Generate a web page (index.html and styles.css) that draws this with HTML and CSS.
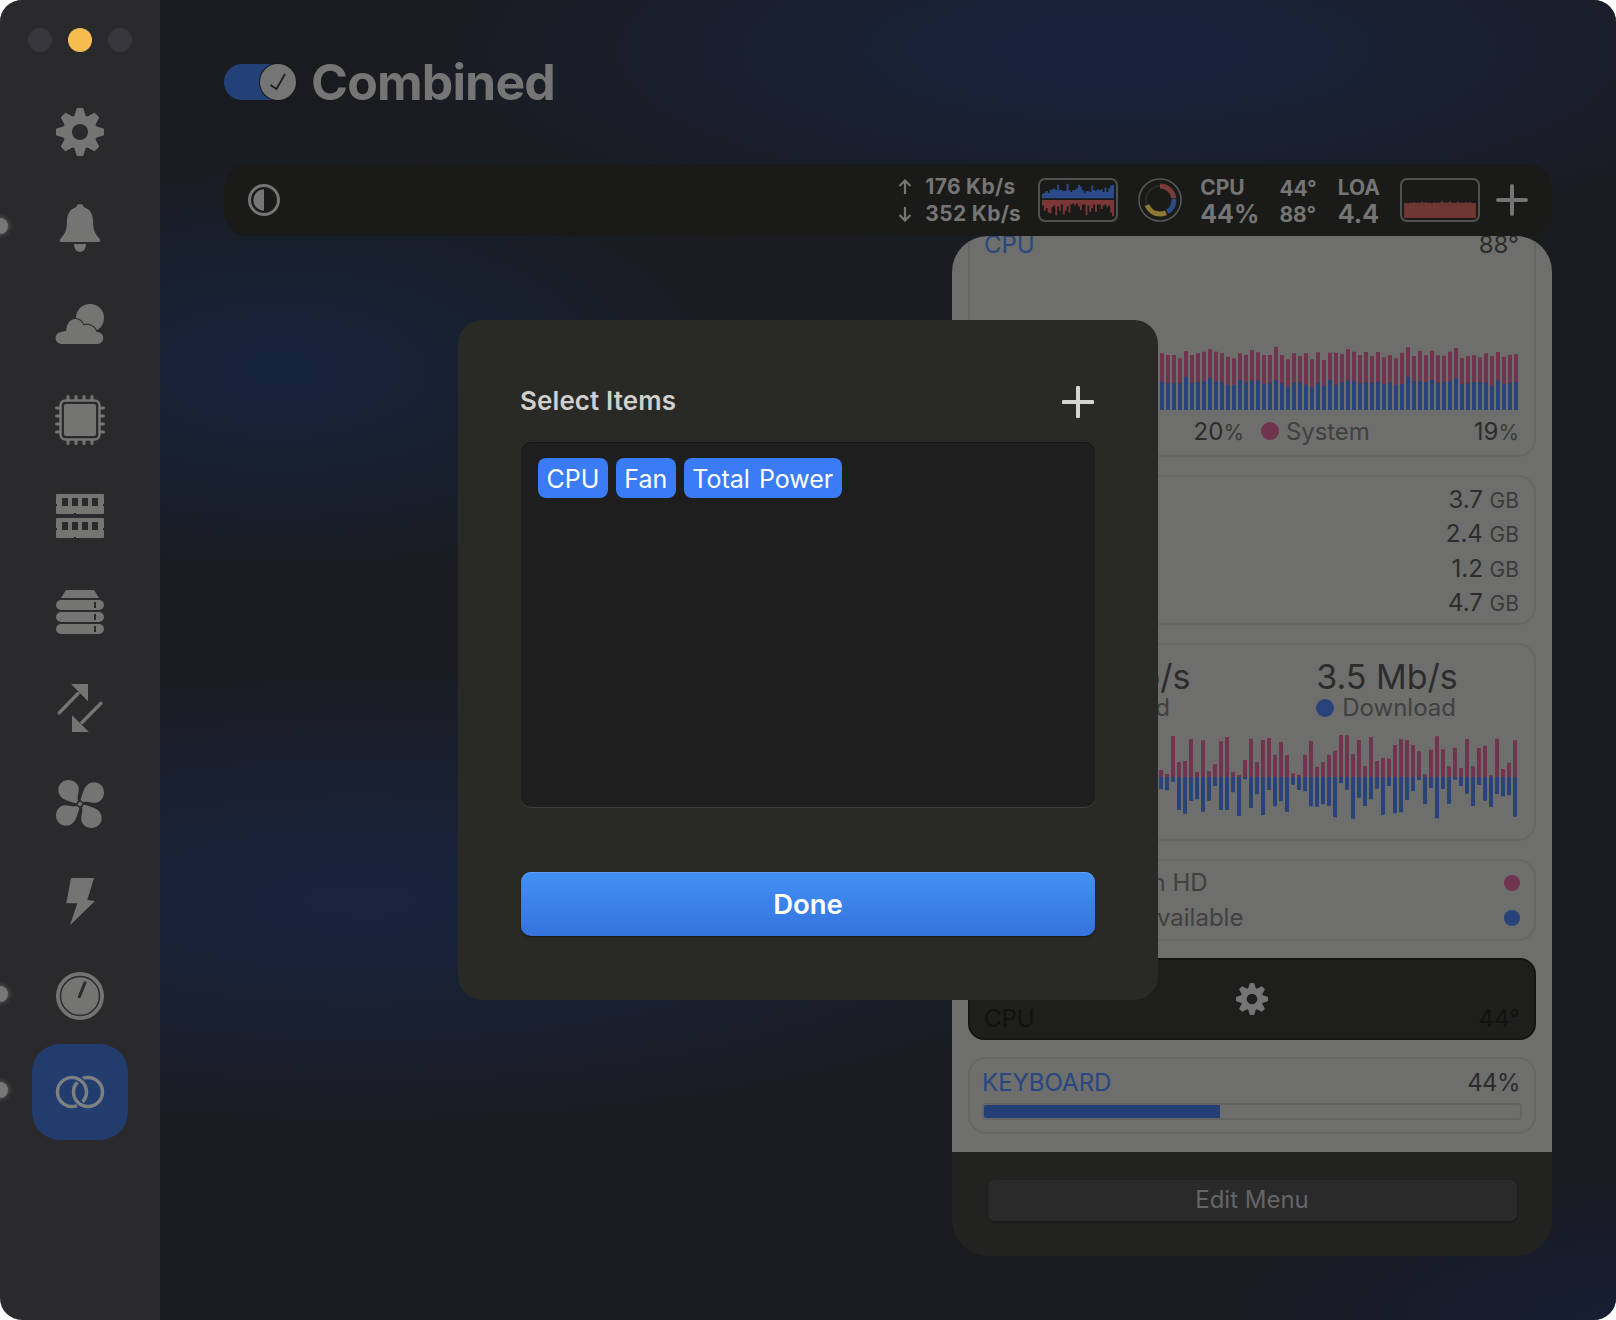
FILE: index.html
```html
<!DOCTYPE html>
<html lang="en">
<head>
<meta charset="utf-8">
<title>Combined</title>
<link rel="stylesheet" href="styles.css">
</head>
<body>
<svg class="defs" width="0" height="0" aria-hidden="true">
  <symbol id="gear" viewBox="0 0 48 48">
    <circle cx="24" cy="24" r="12.5" fill="none" stroke="currentColor" stroke-width="9"/>
    <g fill="currentColor" stroke="currentColor" stroke-width="2" stroke-linejoin="round">
      <polygon points="21.5,1 26.5,1 29,9 19,9"/>
      <polygon points="21.5,1 26.5,1 29,9 19,9" transform="rotate(45 24 24)"/>
      <polygon points="21.5,1 26.5,1 29,9 19,9" transform="rotate(90 24 24)"/>
      <polygon points="21.5,1 26.5,1 29,9 19,9" transform="rotate(135 24 24)"/>
      <polygon points="21.5,1 26.5,1 29,9 19,9" transform="rotate(180 24 24)"/>
      <polygon points="21.5,1 26.5,1 29,9 19,9" transform="rotate(225 24 24)"/>
      <polygon points="21.5,1 26.5,1 29,9 19,9" transform="rotate(270 24 24)"/>
      <polygon points="21.5,1 26.5,1 29,9 19,9" transform="rotate(315 24 24)"/>
    </g>
  </symbol>
</svg>
<div class="window">
  <aside class="sidebar">
    <div class="traffic">
      <span class="light"></span><span class="light light-on"></span><span class="light"></span>
    </div>
    <nav class="nav">
      <div class="nav-item"><svg class="icon" viewBox="0 0 48 48"><use href="#gear"/></svg></div>
      <div class="nav-item"><svg class="icon" viewBox="0 0 48 48"><path d="M24 0c2 0 3.3 1.2 3.7 3C34.5 5 37 11 37 17c0 9 2.200 13 6.800 18 .9 1 .6 3-1.200 3H5.400c-1.800 0-2.100-2-1.200-3C8.800 30 11 26 11 17c0-6 2.500-12 9.300-14C20.700 1.200 22 0 24 0z"/><path d="M18 40h12c0 4.400-2.700 8-6 8s-6-3.600-6-8z"/></svg></div>
      <div class="nav-item"><svg class="icon" viewBox="0 0 48 48"><g transform="translate(0 4)"><circle cx="34" cy="14" r="14"/><path class="cut" d="M6 40a6 6 0 0 1-.8-12c1.800-.8 3.500-1.200 5-1.300C10.600 20 14 15 19 15c4 0 7 2.500 8.500 6.500C31 19.500 38.500 21 40.500 28a6 6 0 0 1 1.500 12z"/></g></svg></div>
      <div class="nav-item"><svg class="icon" viewBox="0 0 48 48"><rect x="4.500" y="4.500" width="39" height="39" rx="5" class="outline"/><rect x="8" y="8" width="32" height="32" rx="2"/><path class="pins" d="M12 .5V4M20 .5V4M28 .5V4M36 .5V4M12 44V47.500M20 44V47.500M28 44V47.500M36 44V47.500M.5 12H4M.5 20H4M.5 28H4M.5 36H4M44 12H47.500M44 20H47.500M44 28H47.500M44 36H47.500"/></svg></div>
      <div class="nav-item"><svg class="icon" viewBox="0 0 48 48"><g transform="translate(0 2)" fill-rule="evenodd"><path d="M1 0H47a1 1 0 0 1 1 1V10h-1v2h1v7a1 1 0 0 1-1 1H20v-1h-2v1H1a1 1 0 0 1-1-1V12h1v-2H0V1a1 1 0 0 1 1-1zM6 4v8h6V4zM16 4v8h6V4zM26 4v8h6V4zM36 4v8h6V4z"/><path d="M1 24H47a1 1 0 0 1 1 1V34h-1v2h1v7a1 1 0 0 1-1 1H20v-1h-2v1H1a1 1 0 0 1-1-1V36h1v-2H0V25a1 1 0 0 1 1-1zM6 28v8h6v-8zM16 28v8h6v-8zM26 28v8h6v-8zM36 28v8h6v-8z"/></g></svg></div>
      <div class="nav-item"><svg class="icon" viewBox="0 0 48 48"><g transform="translate(0 2)" fill-rule="evenodd"><path d="M10 0H38L43 8H5z"/><path d="M5 10H43a5 5 0 0 1 0 10H5a5 5 0 0 1 0-10zM38 12v6h2v-6z"/><path d="M5 22H43a5 5 0 0 1 0 10H5a5 5 0 0 1 0-10zM38 24v6h2v-6z"/><path d="M5 34H43a5 5 0 0 1 0 10H5a5 5 0 0 1 0-10zM38 36v6h2v-6z"/></g></svg></div>
      <div class="nav-item"><svg class="icon" viewBox="0 0 48 48"><path class="stem" d="M3.300 28.700 22 9.500M45 19.300 26 38.500"/><path d="M15 0H32V17.300zM16 31.300 33 48H16z"/></svg></div>
      <div class="nav-item"><svg class="icon" viewBox="0 0 48 48"><path d="M22.500 23C20.500 18 22.800 13 22.800 9 22.800 4 18 0 12.500 0 6.500 0 2.300 4.500 2.300 10c0 6 5 9.500 10 11 4 1.200 7 3 10.200 2z"/><path d="M22.500 23C20.500 18 22.800 13 22.800 9 22.800 4 18 0 12.500 0 6.500 0 2.300 4.500 2.300 10c0 6 5 9.500 10 11 4 1.200 7 3 10.200 2z" transform="rotate(90 24 24)"/><path d="M22.500 23C20.500 18 22.800 13 22.800 9 22.800 4 18 0 12.500 0 6.500 0 2.300 4.500 2.300 10c0 6 5 9.500 10 11 4 1.200 7 3 10.200 2z" transform="rotate(180 24 24)"/><path d="M22.500 23C20.500 18 22.800 13 22.800 9 22.800 4 18 0 12.500 0 6.500 0 2.300 4.500 2.300 10c0 6 5 9.500 10 11 4 1.200 7 3 10.200 2z" transform="rotate(270 24 24)"/><circle cx="24" cy="24" r="2.800" class="hub"/></svg></div>
      <div class="nav-item"><svg class="icon" viewBox="0 -2 48 48"><polygon points="15,0 38,0 31.300,22 39,23 14,47.300 21.300,25.300 10.300,25.300"/></svg></div>
      <div class="nav-item"><svg class="icon" viewBox="0 0 48 48"><circle cx="24" cy="24" r="24"/><circle cx="24" cy="24" r="19.500" class="hub"/><path class="needle" d="M23.300 24.700 29 10.700"/></svg></div>
      <div class="nav-item nav-active"><svg class="icon" viewBox="0 0 48 48"><g transform="translate(0 8)" class="rings"><circle cx="32" cy="16" r="14.500"/><path class="ring-gap" d="M21.080 2.420A14.500 14.500 0 0 1 26.520 6.020"/><path d="M20.960 29.630A14.500 14.500 0 1 1 26.600 25.890"/></g></svg></div>
    </nav>
  </aside>

  <main class="main">
    <header class="head">
      <span class="toggle"><span class="knob"><svg class="check" viewBox="0 0 20 20"><path d="M2.500 13 8.500 17 17 2"/></svg></span></span>
      <h1 class="title">Combined</h1>
    </header>

    <div class="bar">
      <svg class="contrast" viewBox="0 0 32 32"><circle cx="16" cy="16" r="14.500"/><path d="M16 5.300A10.700 10.700 0 0 0 16 26.700z"/></svg>
      <div class="bar-right">
        <div class="net-stat">
          <div class="net-row"><svg class="arrow" viewBox="0 0 14 16"><path d="M7 15V2M1.500 7 7 1.500 12.500 7"/></svg>176 Kb/s</div>
          <div class="net-row"><svg class="arrow" viewBox="0 0 14 16"><path d="M7 1V14M1.500 9 7 14.500 12.500 9"/></svg>352 Kb/s</div>
        </div>
        <div class="mini">
          <svg class="mini-graph" viewBox="0 0 76 40" width="72" height="36" preserveAspectRatio="none">
            <path class="m-blue" d="M1 18V13M3 18V12M5 18V10M7 18V12M9 18V9M11 18V8M13 18V7M15 18V9M17 18V3M19 18V9M21 18V9M23 18V10M25 18V10M27 18V2M29 18V9M31 18V11M33 18V9M35 18V9M37 18V7M39 18V3M41 18V5M43 18V9M45 18V12M47 18V10M49 18V10M51 18V11M53 18V4M55 18V9M57 18V10M59 18V8M61 18V9M63 18V8M65 18V11M67 18V6M69 18V11M71 18V7M73 18V4M75 18V3"/>
            <path class="m-red" d="M1 20V26M3 20V32M5 20V29M7 20V34M9 20V35M11 20V28M13 20V26M15 20V37M17 20V27M19 20V32M21 20V25M23 20V36M25 20V32M27 20V27M29 20V34M31 20V25M33 20V24M35 20V26M37 20V24M39 20V27M41 20V31M43 20V25M45 20V25M47 20V37M49 20V26M51 20V33M53 20V29M55 20V25M57 20V33M59 20V25M61 20V25M63 20V30M65 20V26M67 20V25M69 20V28M71 20V26M73 20V34M75 20V38"/>
          </svg>
        </div>
        <svg class="donut" viewBox="0 0 44 44">
          <circle class="d-outer" cx="22" cy="22" r="21"/>
          <g transform="rotate(-90 22 22)">
            <circle class="d-seg d-grey" cx="22" cy="22" r="14" pathLength="100" stroke-dasharray="100 0"/>
            <circle class="d-seg d-red" cx="22" cy="22" r="14" pathLength="100" stroke-dasharray="23 77"/>
            <circle class="d-seg d-blue" cx="22" cy="22" r="14" pathLength="100" stroke-dasharray="17 83" stroke-dashoffset="-24"/>
            <circle class="d-seg d-yellow" cx="22" cy="22" r="14" pathLength="100" stroke-dasharray="26 74" stroke-dashoffset="-43"/>
          </g>
        </svg>
        <div class="stat"><span class="stat-top">CPU</span><span class="stat-big">44%</span></div>
        <div class="stat stat-temp"><span class="stat-top">44°</span><span class="stat-top">88°</span></div>
        <div class="stat stat-load"><span class="stat-top">LOA</span><span class="stat-big">4.4</span></div>
        <div class="mini mini-load">
          <svg class="mini-graph" viewBox="0 0 72 20" width="72" height="20"><path class="m-load" d="M0 20V5L2 4.500 4 5.500 6 4.500 8 5 10 4 12 5 14 4.500 16 5 18 3.500 20 5 22 4 24 5 26 4.500 28 5.500 30 4 32 5 34 4.500 36 5 38 2.500 40 5 42 4 44 5 46 3 48 5 50 4.500 52 5 54 3.500 56 5 58 4.500 60 5 62 4 64 5 66 4 68 5 72 5V20z"/></svg>
        </div>
        <svg class="plus" viewBox="0 0 32 32"><path d="M16 2V30M2 16H30"/></svg>
      </div>
    </div>

    <section class="panel">
      <div class="panel-body">
        <div class="card card-cpu">
          <div class="row"><span class="blue-label">CPU</span><span class="val">88°</span></div>
          <svg class="cpu-chart" viewBox="60 345 1074 195" width="358" height="65">
            <path class="red" d="M66 540V370M84 540V375M102 540V375M120 540V385M138 540V363M156 540V375M174 540V370M192 540V365M210 540V358M228 540V365M246 540V370M264 540V380M282 540V385M300 540V370M318 540V375M336 540V360M354 540V367M372 540V375M390 540V375M408 540V350M426 540V375M444 540V388M462 540V370M480 540V378M498 540V370M516 540V388M534 540V367M552 540V390M570 540V368M588 540V368M606 540V372M624 540V358M642 540V365M660 540V375M678 540V366M696 540V378M714 540V366M732 540V382M750 540V376M768 540V385M786 540V368M804 540V352M822 540V378M840 540V362M858 540V375M876 540V362M894 540V376M912 540V377M930 540V365M948 540V354M966 540V384M984 540V378M1002 540V376M1020 540V382M1038 540V370M1056 540V378M1074 540V366M1092 540V380M1110 540V374M1128 540V373"/>
            <path class="blue" d="M66 540V456M84 540V460M102 540V458M120 540V460M138 540V441M156 540V458M174 540V456M192 540V454M210 540V443M228 540V455M246 540V456M264 540V465M282 540V465M300 540V450M318 540V458M336 540V452M354 540V452M372 540V462M390 540V458M408 540V450M426 540V460M444 540V470M462 540V458M480 540V456M498 540V464M516 540V472M534 540V458M552 540V468M570 540V450M588 540V464M606 540V456M624 540V452M642 540V454M660 540V460M678 540V455M696 540V458M714 540V455M732 540V462M750 540V458M768 540V465M786 540V462M804 540V441M822 540V454M840 540V454M858 540V456M876 540V450M894 540V460M912 540V456M930 540V454M948 540V443M966 540V462M984 540V460M1002 540V456M1020 540V456M1038 540V458M1056 540V468M1074 540V452M1092 540V462M1110 540V458M1128 540V456"/>
          </svg>
          <div class="legend">
            <div class="legend-item"><span class="dot dot-blue"></span><span class="legend-name">User</span><span class="val">20<small>%</small></span></div>
            <div class="legend-item"><span class="dot dot-red"></span><span class="legend-name">System</span><span class="val">19<small>%</small></span></div>
          </div>
        </div>

        <div class="card card-mem">
          <div class="val">3.7 <small>GB</small></div>
          <div class="val">2.4 <small>GB</small></div>
          <div class="val">1.2 <small>GB</small></div>
          <div class="val">4.7 <small>GB</small></div>
        </div>

        <div class="card card-net">
          <div class="net-cols">
            <div class="net-col net-col-up"><span class="speed">1.7 Mb/s</span><span class="speed-label"><span class="dot dot-red"></span>Upload</span></div>
            <div class="net-col net-col-down"><span class="speed">3.5 Mb/s</span><span class="speed-label"><span class="dot dot-blue"></span>Download</span></div>
          </div>
          <svg class="net-chart" viewBox="54 317 1074 252" width="358" height="84">
            <path class="red" d="M60 443V422M78 443V434M96 443V320M114 443V398M132 443V395M150 443V330M168 443V428M186 443V333M204 443V426M222 443V405M240 443V336M258 443V323M276 443V427M294 443V437M312 443V392M330 443V328M348 443V398M366 443V332M384 443V326M402 443V376M420 443V338M438 443V378M456 443V432M474 443V436M492 443V376M510 443V335M528 443V412M546 443V398M564 443V376M582 443V364M600 443V317M618 443V318M636 443V374M654 443V332M672 443V410M690 443V324M708 443V395M726 443V386M744 443V388M762 443V347M780 443V330M798 443V333M816 443V348M834 443V366M852 443V435M870 443V361M888 443V321M906 443V360M924 443V411M942 443V355M960 443V416M978 443V329M996 443V411M1014 443V356M1032 443V349M1050 443V438M1068 443V328M1086 443V419M1104 443V400M1122 443V333"/>
            <path class="blue" d="M60 443V480M78 443V483M96 443V457M114 443V542M132 443V553M150 443V515M168 443V510M186 443V547M204 443V514M222 443V470M240 443V542M258 443V542M276 443V489M294 443V560M312 443V450M330 443V536M348 443V495M366 443V557M384 443V482M402 443V531M420 443V516M438 443V547M456 443V466M474 443V482M492 443V486M510 443V531M528 443V532M546 443V525M564 443V529M582 443V564M600 443V462M618 443V481M636 443V568M654 443V505M672 443V530M690 443V510M708 443V478M726 443V556M744 443V470M762 443V552M780 443V549M798 443V512M816 443V485M834 443V452M852 443V524M870 443V476M888 443V567M906 443V479M924 443V523M942 443V451M960 443V470M978 443V493M996 443V530M1014 443V467M1032 443V514M1050 443V532M1068 443V494M1086 443V501M1104 443V498M1122 443V562"/>
          </svg>
        </div>

        <div class="card card-disk">
          <div class="row"><span class="disk-label disk-name">Macintosh HD</span><span class="dot dot-red dot-small"></span></div>
          <div class="row"><span class="disk-label disk-free">240 GB Available</span><span class="dot dot-blue dot-small"></span></div>
        </div>

        <div class="card card-dark">
          <svg class="dark-gear" viewBox="0 0 48 48"><use href="#gear"/></svg>
          <div class="row dark-row"><span>CPU</span><span>44°</span></div>
        </div>

        <div class="card card-key">
          <div class="row"><span class="blue-label">KEYBOARD</span><span class="val key-val">44%</span></div>
          <div class="meter"><div class="meter-fill"></div></div>
        </div>
      </div>
      <div class="panel-foot"><div class="edit-btn">Edit Menu</div></div>
    </section>
  </main>

  <span class="edge-dot edge-1"></span>
  <span class="edge-dot edge-2"></span>
  <span class="edge-dot edge-3"></span>

  <div class="modal">
    <div class="modal-head">
      <span class="modal-title">Select Items</span>
      <svg class="modal-plus" viewBox="0 0 32 32"><path d="M16 1.500V30.500M1.500 16H30.500"/></svg>
    </div>
    <div class="tagbox">
      <span class="tag">CPU</span><span class="tag">Fan</span><span class="tag">Total Power</span>
    </div>
    <div class="done">Done</div>
  </div>
</div>
</body>
</html>
```
FILE: styles.css
```css
* { box-sizing: border-box; }
html, body { margin: 0; padding: 0; background: #fff; }
body { width: 1616px; height: 1320px; overflow: hidden; font-family: Inter, "Liberation Sans", sans-serif; }
.defs { position: absolute; }

.window {
  position: relative;
  display: grid;
  grid-template-columns: 160px 1fr;
  height: 1320px;
  border-radius: 22px;
  overflow: hidden;
  box-shadow: inset 0 1px 0 #444;
}

/* sidebar */
.sidebar { background: #2a2a2c; color: #747473; }
.traffic { display: flex; gap: 16px; height: 84px; padding: 28px 0 0 28px; }
.light { width: 24px; height: 24px; border-radius: 50%; background: #38383c; }
.light-on { background: #f5bd4f; }
.nav { display: flex; flex-direction: column; align-items: center; }
.nav-item { width: 96px; height: 96px; display: flex; align-items: center; justify-content: center; }
.icon { width: 48px; height: 48px; fill: #747473; color: #747473; display: block; overflow: visible; }
.nav-active { background: #223c6e; border-radius: 28px; }
.cut { stroke: #2a2a2c; stroke-width: 2; paint-order: stroke; }
.outline { fill: none; stroke: #747473; stroke-width: 2.5; }
.pins { fill: none; stroke: #747473; stroke-width: 3; stroke-linecap: round; }
.stem { fill: none; stroke: #747473; stroke-width: 3.4; stroke-linecap: round; }
.hub { fill: #747473; stroke: #2a2a2c; stroke-width: 1.4; }
.needle { fill: none; stroke: #2a2a2c; stroke-width: 3; stroke-linecap: round; }
.rings { fill: none; stroke: #7d8083; stroke-width: 3.4; }
.rings circle, .rings path { fill: none; }
.ring-gap { stroke: #223c6e; stroke-width: 6.500; }

.edge-dot { position: absolute; left: -8px; width: 16px; height: 16px; border-radius: 50%; background: #777; box-shadow: 0 0 5px 1px rgba(140,140,140,.5); }
.edge-1 { top: 218px; }
.edge-2 { top: 986px; }
.edge-3 { top: 1082px; }

/* main */
.main {
  padding: 64px 64px 0;
  background:
    radial-gradient(ellipse 520px 240px at 120px 370px, #16243d 0%, rgba(22,36,61,0) 100%),
    radial-gradient(ellipse 800px 230px at 960px 50px, #18233e 0%, rgba(24,35,62,0) 100%),
    radial-gradient(ellipse 900px 270px at 200px 900px, #18243e 0%, rgba(24,36,62,0) 100%),
    radial-gradient(ellipse 500px 180px at 1460px 1320px, #171e34 0%, rgba(23,30,52,0) 100%),
    #1a1b1e;
  min-width: 0;
}
.head { display: flex; align-items: center; gap: 15px; height: 36px; margin-bottom: 64px; }
.toggle { width: 72px; height: 36px; border-radius: 18px; background: #234077; display: flex; justify-content: flex-end; }
.knob { width: 36px; height: 36px; border-radius: 50%; background: #757575; box-shadow: 0 0 0 1px #15171c; display: flex; align-items: center; justify-content: center; }
.check { width: 20px; height: 20px; fill: none; stroke: #17181a; stroke-width: 1.6; }
.title { margin: 0; font-size: 50px; line-height: 36px; font-weight: 700; color: #757575; letter-spacing: -.85px; }

.bar { position: relative; z-index: 2; height: 72px; border-radius: 24px; background: #1a1a18; display: flex; align-items: center; justify-content: space-between; padding: 0 24px; color: #757575; }
.contrast { width: 32px; height: 32px; }
.contrast circle { fill: none; stroke: #757575; stroke-width: 3; }
.contrast path { fill: #757575; }
.bar-right { display: flex; align-items: center; }
.net-stat { display: flex; flex-direction: column; gap: 5px; margin-right: 17px; margin-top: 1px; }
.net-row { display: flex; align-items: center; font-size: 21px; line-height: 22px; font-weight: 700; gap: 13px; white-space: nowrap; letter-spacing: .3px; }
.arrow { width: 14px; height: 16px; fill: none; stroke: #757575; stroke-width: 2.2; }
.mini { width: 80px; height: 44px; border: 2px solid #515151; border-radius: 7px; display: flex; align-items: center; justify-content: center; margin-right: 20px; }
.mini-graph { display: block; }
.m-blue { fill: none; stroke: #2a4a8a; stroke-width: 2; }
.m-red { fill: none; stroke: #7a3735; stroke-width: 2; }
.m-load { fill: #6e3632; }
.mini-load { align-items: flex-end; padding-bottom: 2px; margin-right: 16px; margin-left: 20px; }
.donut { width: 44px; height: 44px; margin-right: 18px; }
.d-outer { fill: none; stroke: #565656; stroke-width: 1.6; }
.d-seg { fill: none; stroke-width: 5; }
.d-grey { stroke: #2e2e2e; stroke-width: 1.5; }
.d-red { stroke: #7a3b3b; }
.d-blue { stroke: #2c4a87; }
.d-yellow { stroke: #8f7a35; }
.stat { display: flex; flex-direction: column; gap: 3px; margin-top: 2px; font-weight: 700; color: #757575; }
.stat-temp { margin-left: 20px; }
.stat-load { margin-left: 21px; }
.stat-top { font-size: 21px; line-height: 23px; }
.stat-big { font-size: 25px; line-height: 25px; }
.plus { width: 32px; height: 32px; fill: none; stroke: #757575; stroke-width: 4; stroke-linecap: round; }

/* panel */
.panel { position: relative; width: 600px; height: 1020px; margin-left: auto; border-radius: 36px; overflow: hidden; background: #222221; }
.panel-body { height: 916px; background: #6e6e6c; padding: 0 16px; overflow: hidden; display: flex; flex-direction: column; gap: 18px; color: #2c2c2c; }
.card { flex: none; border: 2px solid #666664; border-radius: 18px; padding: 0 15px 0 14px; font-size: 24px; }
.row { display: flex; justify-content: space-between; align-items: center; }
.blue-label { color: #284680; font-size: 24px; }
.val { color: #2c2c2c; font-size: 24px; text-align: right; }
.val small { font-size: 21px; color: #3a3a3a; }
.dot { display: inline-block; width: 18px; height: 18px; border-radius: 50%; flex: none; }
.dot-red { background: #70344f; }
.dot-blue { background: #28427a; }
.dot-small { width: 16px; height: 16px; margin-right: -1px; }

.card-cpu { height: 235px; margin-top: -14px; padding-top: 5px; display: flex; flex-direction: column; position: relative; }
.card-cpu .row { height: 30px; }
.cpu-chart { display: block; margin-left: auto; margin-right: 1px; margin-top: 86px; }
.red { fill: none; stroke: #70344f; stroke-width: 12; }
.blue { fill: none; stroke: #28427a; stroke-width: 12; }
.legend { display: grid; grid-template-columns: 1fr 258px; column-gap: 17px; margin-top: 5px; }
.legend-item { display: flex; align-items: center; gap: 7px; height: 32px; }
.legend-name { color: #404040; flex: 1; letter-spacing: -.1px; }

.card-mem { height: 150px; padding-top: 6px; }
.card-mem .val { height: 34.300px; line-height: 34.600px; }

.card-net { height: 198px; padding-top: 13px; display: flex; flex-direction: column; }
.net-cols { display: grid; grid-template-columns: 1fr 1fr; justify-items: center; }
.net-col { display: flex; flex-direction: column; width: 140px; }
.net-col-up { margin-left: 18px; }
.net-col-up .speed-label { padding-left: 6px; }
.net-col-down { margin-left: 2px; }
.speed { font-size: 34px; line-height: 38px; color: #2c2c2c; white-space: nowrap; }
.speed-label { display: flex; align-items: center; gap: 8px; font-size: 24px; line-height: 24px; color: #404040; white-space: nowrap; }
.net-chart { display: block; margin: 15px 2px 0 auto; }

.card-disk { height: 82px; padding-top: 4px; }
.card-disk .row { height: 35px; }
.disk-label { color: #404040; white-space: nowrap; }
.disk-name { margin-left: 64px; }
.disk-free { margin-left: 66px; }

.card-dark { height: 82px; margin-top: -1px; background: #1e1e1c; border-color: #151514; border-radius: 16px; position: relative; display: flex; flex-direction: column; align-items: center; padding: 23px 15px 0; }
.dark-gear { width: 32px; height: 32px; color: #757575; display: block; }
.dark-row { position: absolute; left: 14px; right: 14px; bottom: 5px; color: #121211; }

.card-key { height: 77px; margin-top: -1px; padding: 9px 14px 0 12px; }
.key-val { letter-spacing: -.6px; }
.meter { height: 17px; margin: 6px -2px 0 0; border: 2px solid #646462; border-radius: 4px; overflow: hidden; }
.meter-fill { width: 44.400%; height: 17px; background: #243f76; margin: -2px; border-radius: 3px; }

.panel-foot { height: 104px; padding: 28px 35.500px 0; }
.edit-btn { height: 41px; border-radius: 7px; background: #2a2a2a; box-shadow: 0 1px 2px #161616; text-align: center; color: #666; font-size: 24px; line-height: 40px; }

/* modal */
.modal { position: absolute; left: 458px; top: 320px; width: 700px; height: 680px; background: #292a25; border-radius: 24px; padding: 66px 63px 0; z-index: 5; }
.modal-head { display: flex; justify-content: space-between; align-items: center; height: 32px; margin-bottom: 24px; }
.modal-title { font-size: 26px; font-weight: 600; color: #d0d0ce; margin: -3px 0 0 -1px; letter-spacing: .1px; }
.modal-plus { width: 32px; height: 32px; margin-right: 1px; fill: none; stroke: #d5d5d3; stroke-width: 4; stroke-linecap: round; }
.tagbox { height: 365px; background: #1e1e1e; border-radius: 10px; box-shadow: 0 1px 0 #3c3c3c, inset 0 1px 0 #181818; padding: 16px 17px; display: flex; align-items: flex-start; gap: 8px; margin-bottom: 65px; }
.tag { height: 40px; line-height: 42px; padding: 0 8.500px; border-radius: 8px; background: #3a7cf5; color: #fff; font-size: 25px; white-space: nowrap; word-spacing: 2px; }
.done { height: 64px; border-radius: 10px; background: linear-gradient(#4291f3, #3572de); box-shadow: inset 0 1px 0 #5a9ff5, 0 1px 2px #151515; color: #fff; text-align: center; font-size: 27.500px; font-weight: 600; line-height: 64px; }
```
